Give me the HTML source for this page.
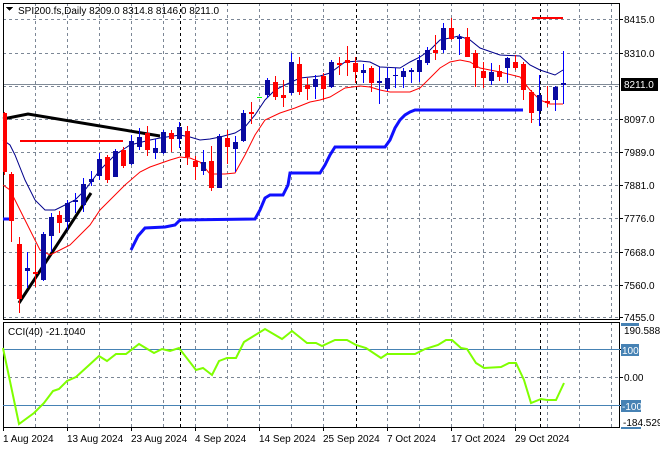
<!DOCTYPE html>
<html><head><meta charset="utf-8"><style>
html,body{margin:0;padding:0;background:#fff;}
svg{display:block;font-family:"Liberation Sans",sans-serif;font-size:10px;}
</style></head><body>
<svg width="660" height="450" viewBox="0 0 660 450" shape-rendering="crispEdges">
<rect width="660" height="450" fill="#fff"/>
<!-- grid -->
<g stroke="#7c8796" stroke-dasharray="3,3" stroke-width="1">
<line x1="3" y1="19.5" x2="620" y2="19.5"/><line x1="3" y1="53.5" x2="620" y2="53.5"/><line x1="3" y1="86.5" x2="620" y2="86.5"/><line x1="3" y1="119.5" x2="620" y2="119.5"/><line x1="3" y1="152.5" x2="620" y2="152.5"/><line x1="3" y1="185.5" x2="620" y2="185.5"/><line x1="3" y1="218.5" x2="620" y2="218.5"/><line x1="3" y1="252.5" x2="620" y2="252.5"/><line x1="3" y1="285.5" x2="620" y2="285.5"/><line x1="3" y1="317.5" x2="620" y2="317.5"/>
<line x1="3" y1="377.5" x2="620" y2="377.5"/>
<path d="M35.5 3V320M67.5 3V320M99.5 3V320M131.5 3V320M163.5 3V320M195.5 3V320M227.5 3V320M259.5 3V320M291.5 3V320M323.5 3V320M387.5 3V320M419.5 3V320M451.5 3V320M483.5 3V320M515.5 3V320M547.5 3V320M579.5 3V320M611.5 3V320"/>
<path d="M35.5 322V428M67.5 322V428M99.5 322V428M131.5 322V428M163.5 322V428M195.5 322V428M227.5 322V428M259.5 322V428M291.5 322V428M323.5 322V428M387.5 322V428M419.5 322V428M451.5 322V428M483.5 322V428M515.5 322V428M547.5 322V428M579.5 322V428M611.5 322V428"/>
</g>
<g stroke="#000" stroke-dasharray="3,3">
<path d="M180.5 3V320M356.5 3V320M540.5 3V320M180.5 322V428M356.5 322V428M540.5 322V428"/>
</g>
<line x1="3" y1="84.5" x2="620" y2="84.5" stroke="#808a96"/>
<!-- frames -->
<g fill="none" stroke="#000">
<rect x="3.5" y="3.5" width="616" height="316"/>
<rect x="3.5" y="322.5" width="616" height="105"/>
</g>
<!-- thick blue donchian -->
<g fill="none" shape-rendering="auto">
<polyline stroke="#1010ff" stroke-width="3" points="131,250 138,236 145,228 165,227 175,225 180,220 255,219 260,210 265,198 270,195 283,195 288,185 290,173 320,173 325,165 330,155 335,147 385,147 390,140 395,128 400,120 405,115 410,112 415,110 523,110"/>
<line x1="3" y1="219" x2="9" y2="219" stroke="#1010ff" stroke-width="3"/>
<polyline stroke="#000" stroke-width="3" points="3,119 28,114 160,136"/>
<polyline stroke="#000" stroke-width="3" points="19,303 91,193"/>
<line x1="20" y1="141" x2="123" y2="141" stroke="#f00" stroke-width="2"/>
<line x1="532" y1="18" x2="563" y2="18" stroke="#f00" stroke-width="2"/>
<polyline stroke="#00008b" stroke-width="1" points="3,140 10,145 15,155 25,180 35,200 45,210 55,210 65,205 75,200 85,190 100,170 115,155 130,145 150,140 160,138 180,135 190,137 200,140 210,139 220,137 235,133 245,127 255,115 265,100 275,90 285,85 300,78 320,76 330,73 345,62 360,61 370,62 380,67 400,68 410,62 420,57 430,50 440,40 450,38 459,36 470,40 480,48 500,55 520,56 530,65 540,70 555,75 563,70"/>
<polyline stroke="#f00" stroke-width="1" points="3,185 10,190 20,210 30,230 40,250 50,255 60,250 70,245 80,235 90,225 100,210 110,200 125,185 140,172 150,167 170,160 180,157 190,158 200,162 210,174 225,174 235,173 245,155 255,135 265,120 280,113 295,108 310,102 320,100 330,97 345,88 360,86 370,87 380,90 390,92 410,92 420,88 430,78 440,68 450,62 460,60 470,62 480,68 500,72 520,77 530,90 540,100 550,104 563,104"/>
</g>
<line x1="257" y1="97.5" x2="262" y2="97.5" stroke="#0f0"/>
<!-- candles -->
<g id="c"></g>
<!-- CCI -->
<g stroke="#4682b4"><line x1="3" y1="349.5" x2="620" y2="349.5"/><line x1="3" y1="405.5" x2="620" y2="405.5"/></g>
<polyline fill="none" stroke="#7fff00" stroke-width="2" shape-rendering="auto" points="3,348 19,424 34,413 44,403 53,391 59,389 67,381 76,377 99,356 107,361 116,354 126,354 139,344 154,353 162,349 170,351 179,348 196,370 203,368 212,375 219,361 227,358 236,358 244,342 265,329 282,339 292,331 307,343 316,343 322,346 335,340 347,340 356,345 366,348 381,358 387,354 415,354 425,349 438,345 446,340 452,340 461,348 467,349 476,363 484,368 501,367 509,363 516,363 524,380 531,403 541,399 547,400 556,400 564,383"/>
<text x="8" y="335" fill="#000">CCI(40) -21.1040</text>
<!-- header -->
<path d="M6 7h7l-3.5 4z" fill="#000"/>
<text x="18" y="14" fill="#000">SPI200.fs,Daily  8209.0 8314.8 8146.0 8211.0</text>
<!-- right axis -->
<g fill="#000">
<text x="624" y="23">8415.0</text><text x="624" y="57">8310.0</text><text x="624" y="123">8097.0</text><text x="624" y="156">7989.0</text><text x="624" y="189">7881.0</text><text x="624" y="222">7776.0</text><text x="624" y="256">7668.0</text><text x="624" y="289">7560.0</text><text x="624" y="321">7455.0</text>
</g>
<g stroke="#000"><path d="M620 19.5h3M620 53.5h3M620 119.5h3M620 152.5h3M620 185.5h3M620 218.5h3M620 252.5h3M620 285.5h3M620 317.5h3M620 349.5h3M620 377.5h3M620 405.5h3"/></g>
<rect x="621" y="78" width="37" height="13" fill="#000"/>
<text x="624" y="88" fill="#fff">8211.0</text>
<rect x="621" y="323" width="18" height="3" fill="#4682b4"/>
<text x="624" y="334" fill="#000">190.5883</text>
<rect x="621" y="344" width="18" height="12" fill="#4682b4"/><text x="622" y="354" fill="#fff">100</text>
<text x="624" y="381" fill="#000">0.00</text>
<rect x="621" y="400" width="20" height="12" fill="#4682b4"/><text x="622" y="410" fill="#fff">-100</text>
<text x="623" y="426" fill="#000">-184.529</text>
<rect x="621" y="427" width="20" height="2" fill="#4682b4"/>
<!-- dates -->
<g fill="#000"><text x="3" y="442">1 Aug 2024</text><text x="67" y="442">13 Aug 2024</text><text x="131" y="442">23 Aug 2024</text><text x="195" y="442">4 Sep 2024</text><text x="259" y="442">14 Sep 2024</text><text x="323" y="442">25 Sep 2024</text><text x="387" y="442">7 Oct 2024</text><text x="451" y="442">17 Oct 2024</text><text x="515" y="442">29 Oct 2024</text></g>
<g stroke="#000"><path d="M3.5 428v3M67.5 428v3M131.5 428v3M195.5 428v3M259.5 428v3M323.5 428v3M387.5 428v3M451.5 428v3M515.5 428v3"/></g>
<!-- candles drawn statically -->
<g>
<!-- format: wick line + body rect -->
<line x1="4.5" y1="112" x2="4.5" y2="175" stroke="#f00"/><rect x="3" y="113" width="4" height="59" fill="#f00"/>
<line x1="11.5" y1="172" x2="11.5" y2="242" stroke="#f00"/><rect x="9" y="174" width="5" height="47" fill="#f00"/>
<line x1="19.5" y1="237" x2="19.5" y2="313" stroke="#f00"/><rect x="17" y="244" width="5" height="55" fill="#f00"/>
<line x1="27.5" y1="252" x2="27.5" y2="288" stroke="#00f"/><rect x="25" y="268" width="5" height="3" fill="#0a0aa0"/>
<line x1="35.5" y1="245" x2="35.5" y2="287" stroke="#f00"/><rect x="33" y="272" width="5" height="2" fill="#f00"/>
<line x1="43.5" y1="232" x2="43.5" y2="281" stroke="#00f"/><rect x="41" y="234" width="5" height="46" fill="#0a0aa0"/>
<line x1="51.5" y1="213" x2="51.5" y2="252" stroke="#00f"/><rect x="49" y="217" width="5" height="19" fill="#0a0aa0"/>
<line x1="59.5" y1="211" x2="59.5" y2="233" stroke="#f00"/><rect x="57" y="215" width="5" height="8" fill="#f00"/>
<line x1="67.5" y1="200" x2="67.5" y2="230" stroke="#00f"/><rect x="65" y="203" width="5" height="19" fill="#0a0aa0"/>
<line x1="75.5" y1="193" x2="75.5" y2="213" stroke="#00f"/><rect x="73" y="200" width="5" height="2" fill="#0a0aa0"/>
<line x1="83.5" y1="178" x2="83.5" y2="212" stroke="#00f"/><rect x="81" y="184" width="5" height="21" fill="#0a0aa0"/>
<line x1="91.5" y1="171" x2="91.5" y2="186" stroke="#00f"/><rect x="89" y="179" width="5" height="3" fill="#0a0aa0"/>
<line x1="99.5" y1="153" x2="99.5" y2="180" stroke="#00f"/><rect x="97" y="159" width="5" height="17" fill="#0a0aa0"/>
<line x1="107.5" y1="155" x2="107.5" y2="183" stroke="#f00"/><rect x="105" y="157" width="5" height="23" fill="#f00"/>
<line x1="115.5" y1="149" x2="115.5" y2="177" stroke="#00f"/><rect x="113" y="151" width="5" height="26" fill="#0a0aa0"/>
<line x1="123.5" y1="147" x2="123.5" y2="168" stroke="#f00"/><rect x="121" y="150" width="5" height="16" fill="#f00"/>
<line x1="131.5" y1="135" x2="131.5" y2="165" stroke="#00f"/><rect x="129" y="141" width="5" height="23" fill="#0a0aa0"/>
<line x1="139.5" y1="128" x2="139.5" y2="150" stroke="#00f"/><rect x="137" y="137" width="5" height="10" fill="#0a0aa0"/>
<line x1="147.5" y1="126" x2="147.5" y2="156" stroke="#f00"/><rect x="145" y="133" width="5" height="17" fill="#f00"/>
<line x1="155.5" y1="139" x2="155.5" y2="159" stroke="#00f"/><rect x="153" y="148" width="5" height="5" fill="#0a0aa0"/>
<line x1="163.5" y1="130" x2="163.5" y2="154" stroke="#00f"/><rect x="161" y="132" width="5" height="21" fill="#0a0aa0"/>
<line x1="171.5" y1="130" x2="171.5" y2="152" stroke="#f00"/><rect x="169" y="133" width="5" height="6" fill="#f00"/>
<line x1="179.5" y1="122" x2="179.5" y2="148" stroke="#00f"/><rect x="177" y="127" width="5" height="12" fill="#0a0aa0"/>
<line x1="187.5" y1="126" x2="187.5" y2="165" stroke="#f00"/><rect x="185" y="131" width="5" height="26" fill="#f00"/>
<line x1="195.5" y1="156" x2="195.5" y2="180" stroke="#f00"/><rect x="193" y="161" width="5" height="6" fill="#f00"/>
<line x1="203.5" y1="150" x2="203.5" y2="175" stroke="#00f"/><rect x="201" y="162" width="5" height="9" fill="#0a0aa0"/>
<line x1="211.5" y1="146" x2="211.5" y2="191" stroke="#f00"/><rect x="209" y="161" width="5" height="27" fill="#f00"/>
<line x1="219.5" y1="134" x2="219.5" y2="188" stroke="#00f"/><rect x="217" y="136" width="5" height="52" fill="#0a0aa0"/>
<line x1="227.5" y1="130" x2="227.5" y2="164" stroke="#f00"/><rect x="225" y="138" width="5" height="9" fill="#f00"/>
<line x1="235.5" y1="136" x2="235.5" y2="172" stroke="#00f"/><rect x="233" y="142" width="5" height="7" fill="#0a0aa0"/>
<line x1="243.5" y1="110" x2="243.5" y2="142" stroke="#00f"/><rect x="241" y="113" width="5" height="28" fill="#0a0aa0"/>
<line x1="251.5" y1="102" x2="251.5" y2="124" stroke="#f00"/><rect x="249" y="112" width="5" height="2" fill="#f00"/>
<line x1="267.5" y1="78" x2="267.5" y2="98" stroke="#00f"/><rect x="265" y="80" width="5" height="15" fill="#0a0aa0"/>
<line x1="275.5" y1="76" x2="275.5" y2="100" stroke="#f00"/><rect x="273" y="82" width="5" height="15" fill="#f00"/>
<line x1="283.5" y1="80" x2="283.5" y2="107" stroke="#f00"/><rect x="281" y="95" width="5" height="3" fill="#f00"/>
<line x1="291.5" y1="53" x2="291.5" y2="95" stroke="#00f"/><rect x="289" y="62" width="5" height="31" fill="#0a0aa0"/>
<line x1="299.5" y1="57" x2="299.5" y2="95" stroke="#f00"/><rect x="297" y="64" width="5" height="28" fill="#f00"/>
<line x1="307.5" y1="78" x2="307.5" y2="100" stroke="#f00"/><rect x="305" y="85" width="5" height="4" fill="#f00"/>
<line x1="315.5" y1="75" x2="315.5" y2="99" stroke="#00f"/><rect x="313" y="79" width="5" height="8" fill="#0a0aa0"/>
<line x1="323.5" y1="73" x2="323.5" y2="100" stroke="#f00"/><rect x="321" y="76" width="5" height="13" fill="#f00"/>
<line x1="331.5" y1="60" x2="331.5" y2="88" stroke="#00f"/><rect x="329" y="62" width="5" height="25" fill="#0a0aa0"/>
<line x1="339.5" y1="57" x2="339.5" y2="75" stroke="#f00"/><rect x="337" y="63" width="5" height="2" fill="#f00"/>
<line x1="347.5" y1="46" x2="347.5" y2="76" stroke="#f00"/><rect x="345" y="60" width="5" height="3" fill="#f00"/>
<line x1="355.5" y1="57" x2="355.5" y2="83" stroke="#f00"/><rect x="353" y="63" width="5" height="9" fill="#f00"/>
<line x1="363.5" y1="64" x2="363.5" y2="83" stroke="#00f"/><rect x="361" y="70" width="5" height="3" fill="#0a0aa0"/>
<line x1="371.5" y1="66" x2="371.5" y2="92" stroke="#f00"/><rect x="369" y="68" width="5" height="15" fill="#f00"/>
<line x1="379.5" y1="67" x2="379.5" y2="104" stroke="#00f"/><rect x="377" y="81" width="5" height="2" fill="#0a0aa0"/>
<line x1="387.5" y1="68" x2="387.5" y2="91" stroke="#00f"/><rect x="385" y="78" width="5" height="11" fill="#0a0aa0"/>
<line x1="395.5" y1="68" x2="395.5" y2="88" stroke="#00f"/><rect x="393" y="75" width="5" height="1" fill="#0a0aa0"/>
<line x1="403.5" y1="68" x2="403.5" y2="88" stroke="#00f"/><rect x="401" y="71" width="5" height="6" fill="#0a0aa0"/>
<line x1="411.5" y1="68" x2="411.5" y2="83" stroke="#00f"/><rect x="409" y="70" width="5" height="2" fill="#0a0aa0"/>
<line x1="419.5" y1="55" x2="419.5" y2="82" stroke="#00f"/><rect x="417" y="60" width="5" height="12" fill="#0a0aa0"/>
<line x1="427.5" y1="47" x2="427.5" y2="65" stroke="#00f"/><rect x="425" y="50" width="5" height="13" fill="#0a0aa0"/>
<line x1="435.5" y1="35" x2="435.5" y2="60" stroke="#f00"/><rect x="433" y="50" width="5" height="3" fill="#f00"/>
<line x1="443.5" y1="23" x2="443.5" y2="53" stroke="#00f"/><rect x="441" y="28" width="5" height="22" fill="#0a0aa0"/>
<line x1="451.5" y1="18" x2="451.5" y2="40" stroke="#f00"/><rect x="449" y="28" width="5" height="11" fill="#f00"/>
<line x1="459.5" y1="34" x2="459.5" y2="55" stroke="#00f"/><rect x="457" y="37" width="5" height="2" fill="#0a0aa0"/>
<line x1="467.5" y1="28" x2="467.5" y2="57" stroke="#f00"/><rect x="465" y="37" width="5" height="20" fill="#f00"/>
<line x1="475.5" y1="50" x2="475.5" y2="87" stroke="#f00"/><rect x="473" y="53" width="5" height="15" fill="#f00"/>
<line x1="483.5" y1="62" x2="483.5" y2="88" stroke="#f00"/><rect x="481" y="71" width="5" height="7" fill="#f00"/>
<line x1="491.5" y1="63" x2="491.5" y2="85" stroke="#00f"/><rect x="489" y="72" width="5" height="9" fill="#0a0aa0"/>
<line x1="499.5" y1="65" x2="499.5" y2="81" stroke="#f00"/><rect x="497" y="71" width="5" height="6" fill="#f00"/>
<line x1="507.5" y1="57" x2="507.5" y2="83" stroke="#00f"/><rect x="505" y="58" width="5" height="10" fill="#0a0aa0"/>
<line x1="515.5" y1="55" x2="515.5" y2="70" stroke="#f00"/><rect x="513" y="62" width="5" height="6" fill="#f00"/>
<line x1="523.5" y1="62" x2="523.5" y2="100" stroke="#f00"/><rect x="521" y="64" width="5" height="26" fill="#f00"/>
<line x1="531.5" y1="90" x2="531.5" y2="123" stroke="#f00"/><rect x="529" y="92" width="5" height="21" fill="#f00"/>
<line x1="539.5" y1="75" x2="539.5" y2="126" stroke="#00f"/><rect x="537" y="95" width="5" height="16" fill="#0a0aa0"/>
<line x1="547.5" y1="86" x2="547.5" y2="107" stroke="#f00"/><rect x="545" y="101" width="5" height="2" fill="#f00"/>
<line x1="555.5" y1="86" x2="555.5" y2="111" stroke="#00f"/><rect x="553" y="87" width="5" height="13" fill="#0a0aa0"/>
<line x1="563.5" y1="51" x2="563.5" y2="104" stroke="#00f"/><rect x="561" y="83" width="5" height="2" fill="#0a0aa0"/>
</g>
</svg>
</body></html>
